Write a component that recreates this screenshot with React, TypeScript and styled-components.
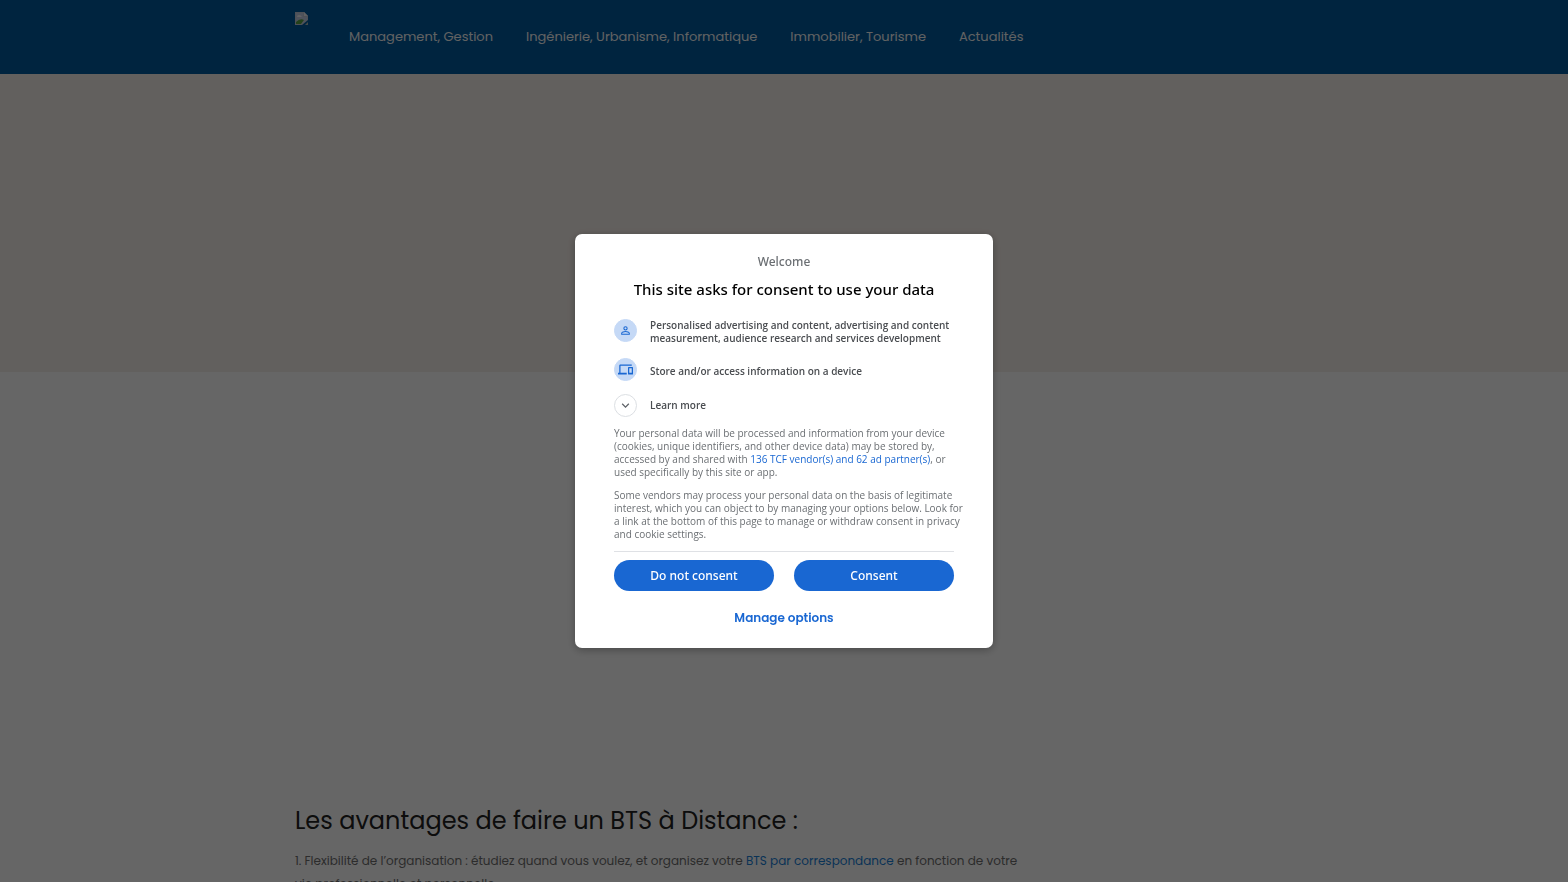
import React from "react";
import styled, { createGlobalStyle } from "styled-components";

const GlobalStyle = createGlobalStyle`
  *, *::before, *::after { box-sizing: border-box; }
  body {
    margin: 0;
    overflow: hidden;
    background: #ffffff;
    font-family: Poppins, Inter, sans-serif;
  }
`;

const Page = styled.div`
  height: 100vh;
  overflow: hidden;
`;

const Container = styled.div`
  width: 100%;
  max-width: 978px;
  margin: 0 auto;
`;

const Header = styled.header`
  background: #005a9e;
`;

const HeaderRow = styled(Container)`
  display: flex;
  align-items: flex-start;
  gap: 41px;
  height: 74px;
  padding-top: 12px;
`;

const Logo = styled.a`
  display: block;
  width: 13px;
  height: 13px;

  svg {
    display: block;
  }
`;

const Nav = styled.nav`
  display: flex;
  gap: 33px;
  padding-top: 15px;
`;

const NavLink = styled.a`
  color: #f2f4f6;
  font-size: 13px;
  line-height: 20px;
  font-weight: 400;
  text-decoration: none;
  white-space: nowrap;
`;

const Hero = styled.section`
  height: 298px;
  background: #f6f0ea;
`;

const Article = styled(Container)`
  padding-top: 428px;
`;

const ArticleBody = styled.div`
  max-width: 750px;
`;

const Heading = styled.h2`
  margin: 0 0 8px;
  color: #222222;
  font-size: 24px;
  line-height: 41px;
  font-weight: 400;
`;

const Paragraph = styled.p`
  margin: 0;
  color: #6e6e6e;
  font-size: 12px;
  line-height: 23px;
`;

const TextLink = styled.a`
  color: #1a7fd8;
  text-decoration: none;
`;

const Overlay = styled.div`
  position: fixed;
  inset: 0;
  display: flex;
  align-items: center;
  justify-content: center;
  background: rgba(0, 0, 0, 0.6);
`;

const Dialog = styled.div`
  width: 418px;
  max-width: 100%;
  padding: 19px 39px 15px;
  border-radius: 7px;
  background: #ffffff;
  box-shadow: 0 2px 8px rgba(0, 0, 0, 0.3);
  color: #6b6f73;
  font-family: "Open Sans", sans-serif;
  font-size: 10px;
  line-height: 13px;
`;

const Welcome = styled.p`
  margin: 0 0 8px;
  font-family: "Noto Sans", sans-serif;
  font-size: 12px;
  line-height: 18px;
  font-weight: 500;
  text-align: center;
`;

const Title = styled.h1`
  margin: 0 0 20px;
  color: #000000;
  font-family: "Noto Sans", sans-serif;
  font-size: 15px;
  line-height: 20px;
  font-weight: 500;
  text-align: center;
`;

const Purposes = styled.ul`
  display: grid;
  gap: 13px;
  margin: 0 0 10px;
  padding: 0;
  list-style: none;
`;

const Purpose = styled.li`
  display: flex;
  align-items: flex-start;
  gap: 13px;
  color: #4a4d51;
  font-weight: 600;
`;

const PurposeText = styled.span`
  display: flex;
  align-items: center;
  min-height: 26px;
`;

const LearnMore = styled.button`
  display: flex;
  align-items: center;
  gap: 13px;
  margin: 0 0 10px;
  padding: 0;
  border: 0;
  background: none;
  color: #4a4d51;
  font: inherit;
  font-weight: 600;
  cursor: pointer;
`;

const IconDisc = styled.span<{ $outlined?: boolean }>`
  display: flex;
  flex: none;
  align-items: center;
  justify-content: center;
  width: 23px;
  height: 23px;
  border: 1px solid ${(p) => (p.$outlined ? "#dcdfe3" : "#c5d9f6")};
  border-radius: 50%;
  background: ${(p) => (p.$outlined ? "#ffffff" : "#c5d9f6")};
  color: ${(p) => (p.$outlined ? "#5f6368" : "#1967d2")};

  svg {
    display: block;
    flex: none;
    fill: currentColor;
  }
`;

const Notice = styled.p`
  margin: 0 -10px 10px 0;
`;

const VendorLink = styled.a`
  color: #1967d2;
  text-decoration: none;
`;

const Actions = styled.div`
  display: grid;
  grid-template-columns: 1fr 1fr;
  gap: 20px;
  padding-top: 8px;
  border-top: 1px solid #dfe1e5;
`;

const PillButton = styled.button`
  height: 31px;
  padding: 0;
  border: 0;
  border-radius: 16px;
  background: #1967d2;
  color: #ffffff;
  font-family: "Noto Sans", sans-serif;
  font-size: 12px;
  line-height: 16px;
  font-weight: 500;
  cursor: pointer;
`;

const ManageButton = styled.button`
  display: block;
  margin: 11px auto 0;
  padding: 0 8px;
  border: 0;
  background: none;
  color: #1967d2;
  font-family: Poppins, Inter, sans-serif;
  font-size: 12px;
  line-height: 31px;
  font-weight: 600;
  cursor: pointer;
`;

const navItems = [
  "Management, Gestion",
  "Ingénierie, Urbanisme, Informatique",
  "Immobilier, Tourisme",
  "Actualités",
];

const LogoMark = () => (
  <svg width="13" height="13" viewBox="0 0 13 13" aria-hidden="true">
    <path d="M0 0h9l4 4v5l-4 4H0z" fill="#c3cbd6" />
    <path d="M1 1h7v4h4v3l-4 4H1z" fill="#c6cfe6" />
    <path d="M2 5q0-2 2-2t3 2z" fill="#f4f6fa" />
    <path d="M1 12V10q4-4 8-2l-3 4z" fill="#5aa545" />
    <path d="M9 0v4h4z" fill="#eef0f4" />
    <path d="M13 8v5H7z" fill="#005a9e" />
    <path d="M13 10v3h-3z" fill="#a9b8b4" />
  </svg>
);

const PersonIcon = () => (
  <svg width="13" height="13" viewBox="0 0 24 24" aria-hidden="true">
    <path d="M12 5.9a2.1 2.1 0 1 1 0 4.2 2.1 2.1 0 0 1 0-4.2m0 9c2.97 0 6.1 1.46 6.1 2.1v1.1H5.9V17c0-.64 3.13-2.1 6.1-2.1M12 4a4 4 0 1 0 0 8 4 4 0 0 0 0-8zm0 9c-2.67 0-8 1.34-8 4v3h16v-3c0-2.66-5.33-4-8-4z" />
  </svg>
);

const DevicesIcon = () => (
  <svg width="15" height="15" viewBox="0 0 24 24" aria-hidden="true">
    <path d="M4 6h18V4H4c-1.1 0-2 .9-2 2v11H0v3h14v-3H4V6zm19 2h-6c-.55 0-1 .45-1 1v10c0 .55.45 1 1 1h6c.55 0 1-.45 1-1V9c0-.55-.45-1-1-1zm-1 9h-4v-7h4v7z" />
  </svg>
);

const ChevronIcon = () => (
  <svg width="15" height="15" viewBox="0 0 24 24" aria-hidden="true">
    <path d="M16.59 8.59 12 13.17 7.41 8.59 6 10l6 6 6-6z" />
  </svg>
);

export default function App() {
  return (
    <>
      <GlobalStyle />
      <Page>
        <Header>
          <HeaderRow>
            <Logo href="#" aria-label="Accueil">
              <LogoMark />
            </Logo>
            <Nav>
              {navItems.map((item) => (
                <NavLink href="#" key={item}>
                  {item}
                </NavLink>
              ))}
            </Nav>
          </HeaderRow>
        </Header>
        <Hero />
        <Article as="main">
          <ArticleBody>
            <Heading>Les avantages de faire un BTS à Distance :</Heading>
            <Paragraph>
              1. Flexibilité de l’organisation : étudiez quand vous voulez, et organisez votre{" "}
              <TextLink href="#">BTS par correspondance</TextLink> en fonction de votre
              <br />
              vie professionnelle et personnelle.
            </Paragraph>
          </ArticleBody>
        </Article>
      </Page>
      <Overlay>
        <Dialog role="dialog" aria-modal="true" aria-labelledby="consent-title">
          <Welcome>Welcome</Welcome>
          <Title id="consent-title">This site asks for consent to use your data</Title>
          <Purposes>
            <Purpose>
              <IconDisc>
                <PersonIcon />
              </IconDisc>
              <PurposeText>
                Personalised advertising and content, advertising and content measurement, audience
                research and services development
              </PurposeText>
            </Purpose>
            <Purpose>
              <IconDisc>
                <DevicesIcon />
              </IconDisc>
              <PurposeText>Store and/or access information on a device</PurposeText>
            </Purpose>
          </Purposes>
          <LearnMore type="button" aria-expanded="false">
            <IconDisc $outlined>
              <ChevronIcon />
            </IconDisc>
            Learn more
          </LearnMore>
          <Notice>
            Your personal data will be processed and information from your device (cookies, unique
            identifiers, and other device data) may be stored by, accessed by and shared with{" "}
            <VendorLink href="#">136 TCF vendor(s) and 62 ad partner(s)</VendorLink>, or used
            specifically by this site or app.
          </Notice>
          <Notice>
            Some vendors may process your personal data on the basis of legitimate interest, which
            you can object to by managing your options below. Look for a link at the bottom of this
            page to manage or withdraw consent in privacy and cookie settings.
          </Notice>
          <Actions>
            <PillButton type="button">Do not consent</PillButton>
            <PillButton type="button">Consent</PillButton>
          </Actions>
          <ManageButton type="button">Manage options</ManageButton>
        </Dialog>
      </Overlay>
    </>
  );
}
